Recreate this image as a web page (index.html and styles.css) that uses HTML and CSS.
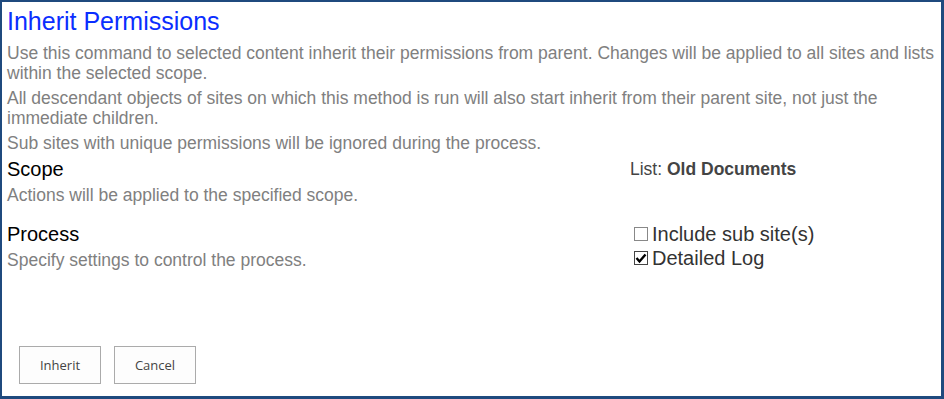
FILE: index.html
```html
<!DOCTYPE html>
<html lang="en">
<head>
    <meta charset="UTF-8">
    <meta name="viewport" content="width=device-width, initial-scale=1.0">
    <title>Inherit Permissions</title>
    <link rel="stylesheet" href="styles.css">
</head>
<body>
    <div class="dialog">
        <h1 class="dialog-title">Inherit Permissions</h1>
        <div class="intro">
            <p>Use this command to selected content inherit their permissions from parent. Changes will be applied to all sites and lists within the selected scope.</p>
            <p>All descendant objects of sites on which this method is run will also start inherit from their parent site, not just the immediate children.</p>
            <p>Sub sites with unique permissions will be ignored during the process.</p>
        </div>

        <div class="section">
            <div class="section-info">
                <h2 class="section-title">Scope</h2>
                <p class="section-desc">Actions will be applied to the specified scope.</p>
            </div>
            <div class="section-field">
                <span class="scope-label">List: <b>Old Documents</b></span>
            </div>
        </div>

        <div class="section">
            <div class="section-info">
                <h2 class="section-title">Process</h2>
                <p class="section-desc">Specify settings to control the process.</p>
            </div>
            <div class="section-field check-list">
                <label class="check-row">
                    <span class="check-box"></span>
                    Include sub site(s)
                </label>
                <label class="check-row">
                    <span class="check-box checked">
                        <svg viewBox="0 0 14 14" width="14" height="14"><path d="M2.5 7 L5.5 10.5 L11.5 3.5" fill="none" stroke="#000" stroke-width="2.4"/></svg>
                    </span>
                    Detailed Log
                </label>
            </div>
        </div>

        <div class="dialog-actions">
            <button class="btn">Inherit</button>
            <button class="btn">Cancel</button>
        </div>
    </div>
</body>
</html>
```

FILE: styles.css
```css
* {
    margin: 0;
    padding: 0;
    box-sizing: border-box;
}

body {
    font-family: 'Liberation Sans', Arial, sans-serif;
    background: #ffffff;
    width: 944px;
    height: 399px;
    overflow: hidden;
}

.dialog {
    width: 944px;
    height: 399px;
    border-style: solid;
    border-color: #1f4a7e;
    border-width: 2px 3px 3px 2px;
    padding: 4px 0 0 5px;
    display: flex;
    flex-direction: column;
}

.dialog-title {
    color: #0a2eff;
    font-weight: normal;
    font-size: 25px;
    line-height: 30px;
    margin-bottom: 7px;
}

.intro p {
    color: #808080;
    font-size: 17.5px;
    line-height: 20px;
    margin-bottom: 5px;
}

.section {
    display: flex;
}

.section-info {
    width: 623px;
}

.section-title {
    color: #000;
    font-weight: normal;
    font-size: 20px;
    line-height: 22px;
}

.section-desc {
    color: #808080;
    font-size: 17.5px;
    line-height: 20px;
    margin: 5px 0 18px;
}

.section-field {
    display: flex;
    flex-direction: column;
}

.check-list {
    margin-top: -1px;
}

.scope-label {
    color: #444;
    font-size: 17.5px;
    line-height: 20px;
    margin-top: 1px;
}

.check-row {
    display: flex;
    align-items: center;
    gap: 4px;
    color: #333;
    font-size: 20px;
    line-height: 24px;
    margin-left: 4px;
}

.check-box {
    width: 14px;
    height: 14px;
    border: 1px solid #888;
    background: #fff;
    display: inline-block;
}

.check-box.checked {
    border-color: #444;
}

.check-box svg {
    display: block;
    margin: -1px;
}

.dialog-actions {
    margin-top: auto;
    display: flex;
    gap: 13px;
    padding: 0 0 12px 12px;
}

.btn {
    width: 82px;
    height: 38px;
    background: #fdfdfd;
    border: 1px solid #ababab;
    color: #444;
    font-family: 'Open Sans', sans-serif;
    font-size: 13px;
}
```
